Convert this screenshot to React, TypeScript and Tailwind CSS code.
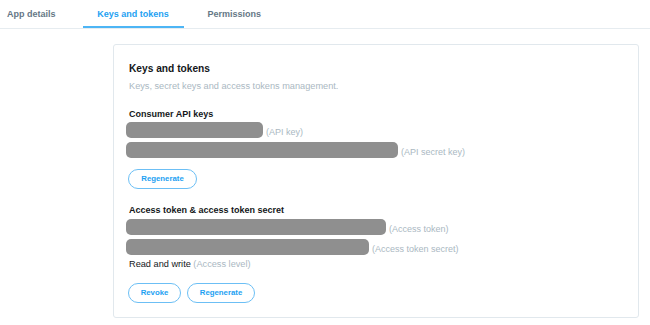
import React from 'react';

const keyRows = [
  { width: 'w-[137px]', label: '(API key)' },
  { width: 'w-[272px]', label: '(API secret key)' },
];

const tokenRows = [
  { width: 'w-[260px]', label: '(Access token)' },
  { width: 'w-[243px]', label: '(Access token secret)' },
];

const MaskedRow: React.FC<{ width: string; label: string }> = ({ width, label }) => (
  <div className="flex items-center -ml-[3px]">
    <div className={`${width} h-[16px] rounded-[5px] bg-[#8f8f8f]`} />
    <span className="ml-[3px] pt-[4px] text-[9px] leading-[12px] text-[#aab8c2]">{label}</span>
  </div>
);

const PillButton: React.FC<{ width: string; children: React.ReactNode }> = ({ width, children }) => (
  <button
    className={`${width} h-[20px] rounded-full border border-[#6cbff5] bg-white text-[7.8px] font-bold text-[#1da1f2] leading-none`}
  >
    {children}
  </button>
);

const App: React.FC = () => {
  return (
    <div
      className="w-[650px] h-[325px] bg-white overflow-hidden"
      style={{ fontFamily: '"Liberation Sans", Arial, sans-serif' }}
    >
      {/* Tabs */}
      <div className="flex h-[29px] border-b border-[#e6ecf0] text-[9px] font-bold leading-[12px]">
        <div className="ml-[7px] flex items-center pt-[1px] pb-[1px] text-[#657786]">App details</div>
        <div className="ml-[27px] w-[101px] flex items-center justify-center pt-[1px] border-b-2 border-[#4db5f5] text-[#1da1f2]">
          Keys and tokens
        </div>
        <div className="ml-[24px] flex items-center pt-[1px] pb-[1px] text-[#657786]">Permissions</div>
      </div>

      {/* Card */}
      <div className="ml-[113px] mt-[15px] w-[526px] rounded-[3px] border border-[#e1e8ed] px-[15px] pt-[18px] pb-[14px]">
        <h2 className="text-[10.2px] font-bold leading-[12px] text-[#14171a]">Keys and tokens</h2>
        <p className="mt-[5px] text-[9.2px] leading-[12px] text-[#aab8c2]">
          Keys, secret keys and access tokens management.
        </p>

        <h3 className="mt-[16px] text-[9px] font-bold leading-[12px] text-[#14171a]">Consumer API keys</h3>
        <div className="mt-[2px] flex flex-col gap-[4px]">
          {keyRows.map((row) => (
            <MaskedRow key={row.label} width={row.width} label={row.label} />
          ))}
        </div>
        <div className="mt-[11px] -ml-[1px] flex">
          <PillButton width="w-[69px]">Regenerate</PillButton>
        </div>

        <h3 className="mt-[15px] text-[9px] font-bold leading-[12px] text-[#14171a]">
          Access token &amp; access token secret
        </h3>
        <div className="mt-[3px] flex flex-col gap-[4px]">
          {tokenRows.map((row) => (
            <MaskedRow key={row.label} width={row.width} label={row.label} />
          ))}
        </div>
        <p className="mt-[3px] text-[9.2px] leading-[12px] text-[#14171a]">
          Read and write <span className="text-[#aab8c2]">(Access level)</span>
        </p>
        <div className="mt-[13px] -ml-[1px] flex gap-[6px]">
          <PillButton width="w-[53px]">Revoke</PillButton>
          <PillButton width="w-[68px]">Regenerate</PillButton>
        </div>
      </div>
    </div>
  );
};

export default App;
